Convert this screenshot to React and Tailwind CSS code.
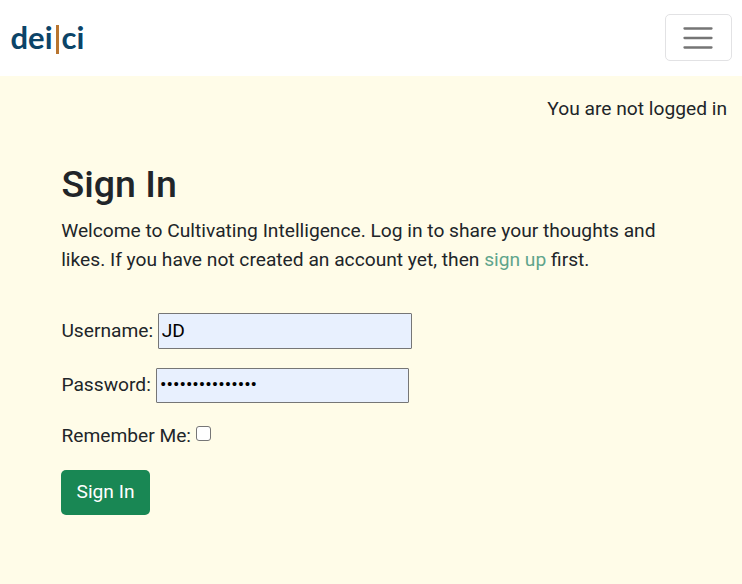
function Header() {
  return (
    <header className="flex h-[76px] items-start justify-between bg-white pt-[14px] pr-[10px] pl-[10.5px]">
      <a
        href="#"
        className="mt-[4px] flex items-center font-['Lato'] text-[31px] leading-[38px] font-bold text-[#0b4468] antialiased"
      >
        <span>dei</span>
        <span className="mt-[4px] mr-[3px] ml-[3px] h-[29px] w-[3px] bg-[#b87530]" />
        <span>ci</span>
      </a>
      <button
        type="button"
        aria-label="Toggle navigation"
        className="flex h-[47px] w-[67px] items-center justify-center rounded-[5px] border border-[#e2e2e4] pr-[2px]"
      >
        <svg width="30" height="24" viewBox="0 0 30 24" stroke="#757575" strokeWidth="2.3" strokeLinecap="round">
          <path d="M1.5 2.5h27M1.5 12h27M1.5 21.5h27" />
        </svg>
      </button>
    </header>
  );
}

function Field({ label, type, value, labelClassName, className }) {
  return (
    <label className="flex items-start">
      <span className={labelClassName}>{label}</span>
      <input
        type={type}
        defaultValue={value}
        className={`rounded-[1px] border border-[#767676] bg-[#e8f0fe] px-[3px] pb-[2px] text-black outline-none ${className}`}
      />
    </label>
  );
}

export default function App() {
  return (
    <div className="h-[584px] overflow-hidden bg-[#fffce8] font-['Roboto',sans-serif] text-[19.2px] leading-[29px] text-[#212529] antialiased">
      <Header />
      <p className="pt-[18px] pr-[15px] text-right">You are not logged in</p>
      <main className="pt-[38px] pl-[61px]">
        <h1 className="ml-[0.6px] text-[37.5px] leading-[46px] font-medium">Sign In</h1>
        <p className="mt-[9px] ml-[0.2px] w-[620px]">
          Welcome to Cultivating Intelligence. Log in to share your thoughts and
          <br />
          likes. If you have not created an account yet, then{" "}
          <a href="#" className="text-[#5fa58c]">sign up</a> first.
        </p>
        <form className="mt-[39px] flex flex-col items-start">
          <div className="ml-[0.4px]">
            <Field
              label="Username:"
              type="text"
              value="JD"
              labelClassName="mt-[3px]"
              className="ml-[4.6px] h-[36px] w-[254px]"
            />
          </div>
          <div className="mt-[19px] ml-[0.4px]">
            <Field
              label="Password:"
              type="password"
              value="abcdefghijklmno"
              labelClassName="mt-[2px]"
              className="ml-[5.2px] h-[35px] w-[253px]"
            />
          </div>
          <label className="mt-[18px] ml-[0.4px] flex items-center">
            <span>Remember Me:</span>
            <input
              type="checkbox"
              className="mb-[4px] ml-[4.6px] h-[15px] w-[15px] appearance-none rounded-[3px] border border-[#767676] bg-white"
            />
          </label>
          <button
            type="button"
            className="mt-[20px] h-[45px] w-[89px] rounded-[5px] bg-[#198754] pb-[2px] text-white"
          >
            Sign In
          </button>
        </form>
      </main>
    </div>
  );
}
